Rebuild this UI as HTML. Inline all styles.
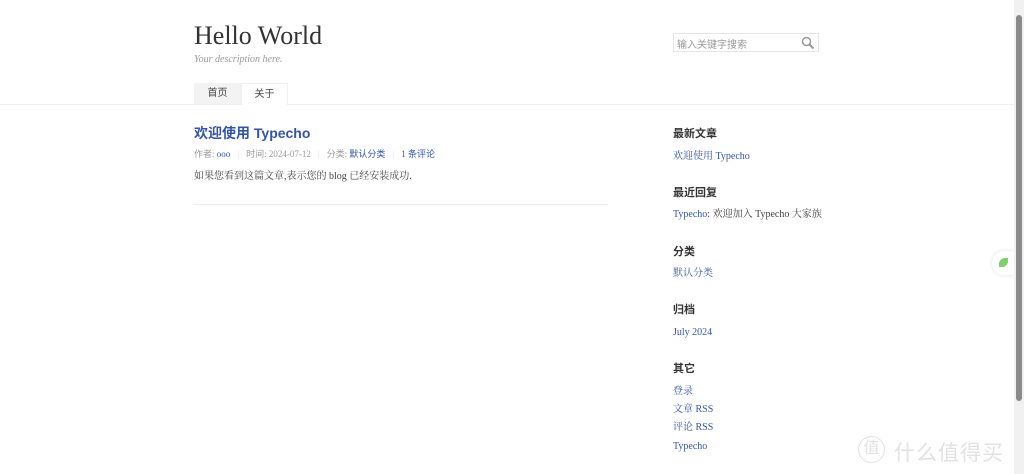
<!DOCTYPE html>
<html><head><meta charset="utf-8"><style>
*{margin:0;padding:0;box-sizing:border-box}
body{width:1024px;height:474px;overflow:hidden;background:#fff;font-family:"Liberation Serif","Noto Serif CJK SC",serif;color:#444;position:relative;font-size:10px}
a{color:#3354aa;text-decoration:none}
.abs{position:absolute}
.cjk{font-family:"Liberation Sans","Noto Sans CJK SC",sans-serif}
h3{position:absolute;left:673px;font-size:11px;font-weight:bold;color:#333;font-family:"Liberation Sans","Noto Sans CJK SC",sans-serif}
.sl{position:absolute;left:673px;font-size:10px;line-height:12px}
</style></head><body>
<div class="abs" style="left:194px;top:21px;font-size:26px;color:#333;font-family:'Liberation Serif',serif">Hello World</div>
<div class="abs" style="left:194px;top:54px;font-size:10px;color:#999;font-style:italic">Your description here.</div>
<div class="abs" style="left:673px;top:33px;width:146px;height:19px;border:1px solid #e6e6e6"></div>
<div class="abs cjk" style="left:677px;top:36px;font-size:10px;color:#999">输入关键字搜索</div>
<svg class="abs" style="left:801px;top:36px" width="14" height="14" viewBox="0 0 14 14"><circle cx="5.5" cy="5.5" r="4" fill="none" stroke="#999" stroke-width="1.5"/><path d="M8.5 8.5L12.5 12.5" stroke="#999" stroke-width="2"/></svg>
<div class="abs" style="left:0;top:104px;width:1014px;height:1px;background:#eee"></div>
<div class="abs cjk" style="left:194px;top:83px;width:47px;height:21px;background:#f3f3f3;font-size:10px;color:#444;text-align:center;line-height:21px">首页</div>
<div class="abs cjk" style="left:241px;top:83px;width:47px;height:22px;background:#fff;border:1px solid #f0f0f0;border-bottom:none;font-size:10px;color:#444;text-align:center;line-height:21px">关于</div>
<div class="abs cjk" style="left:194px;top:123px;font-size:14px;font-weight:bold;color:#3354aa">欢迎使用 Typecho</div>
<div class="abs" style="left:194px;top:147px;font-size:9px;color:#999;font-family:'Liberation Serif','Noto Sans CJK SC',serif">作者: <a>ooo</a><span style="color:#ddd;margin:0 7px">|</span>时间: 2024-07-12<span style="color:#ddd;margin:0 7px">|</span>分类: <a>默认分类</a><span style="color:#ddd;margin:0 7px">|</span><a>1 条评论</a></div>
<div class="abs" style="left:194px;top:167px;font-size:10px;color:#444">如果您看到这篇文章,表示您的 blog 已经安装成功.</div>
<div class="abs" style="left:194px;top:204px;width:414px;height:1px;background:#eee"></div>
<h3 style="top:125px">最新文章</h3>
<div class="sl" style="top:151px"><a>欢迎使用 Typecho</a></div>
<h3 style="top:184px">最近回复</h3>
<div class="sl" style="top:209px"><a>Typecho</a>: 欢迎加入 Typecho 大家族</div>
<h3 style="top:243px">分类</h3>
<div class="sl" style="top:268px"><a>默认分类</a></div>
<h3 style="top:301px">归档</h3>
<div class="sl" style="top:327px"><a>July 2024</a></div>
<h3 style="top:360px">其它</h3>
<div class="sl" style="top:386px"><a>登录</a></div>
<div class="sl" style="top:404px"><a>文章 RSS</a></div>
<div class="sl" style="top:422px"><a>评论 RSS</a></div>
<div class="sl" style="top:441px"><a>Typecho</a></div>
<div class="abs" style="left:992px;top:251px;width:24px;height:24px;border-radius:12px 0 0 12px;background:#fff;box-shadow:0 0 4px rgba(0,0,0,.12)"></div>
<div class="abs" style="left:999px;top:258px;width:9px;height:9px;background:#7ed06a;border-radius:6px 0 6px 0"></div>
<div class="abs" style="left:1014px;top:236px;width:4px;height:30px;background:#222"></div>
<div class="abs" style="left:1014px;top:0;width:10px;height:474px;background:#f1f1f1"></div>
<div class="abs" style="left:1016px;top:15px;width:6px;height:386px;background:#8a8a8a;border-radius:3px"></div>
<div class="abs cjk" style="left:858px;top:436px;width:27px;height:27px;border:1.5px solid #e2e2e2;border-radius:50%;color:#e2e2e2;font-size:16px;text-align:center;line-height:24px">值</div>
<div class="abs cjk" style="left:894px;top:437px;font-size:21px;color:#e2e2e2;letter-spacing:1px">什么值得买</div>
</body></html>
